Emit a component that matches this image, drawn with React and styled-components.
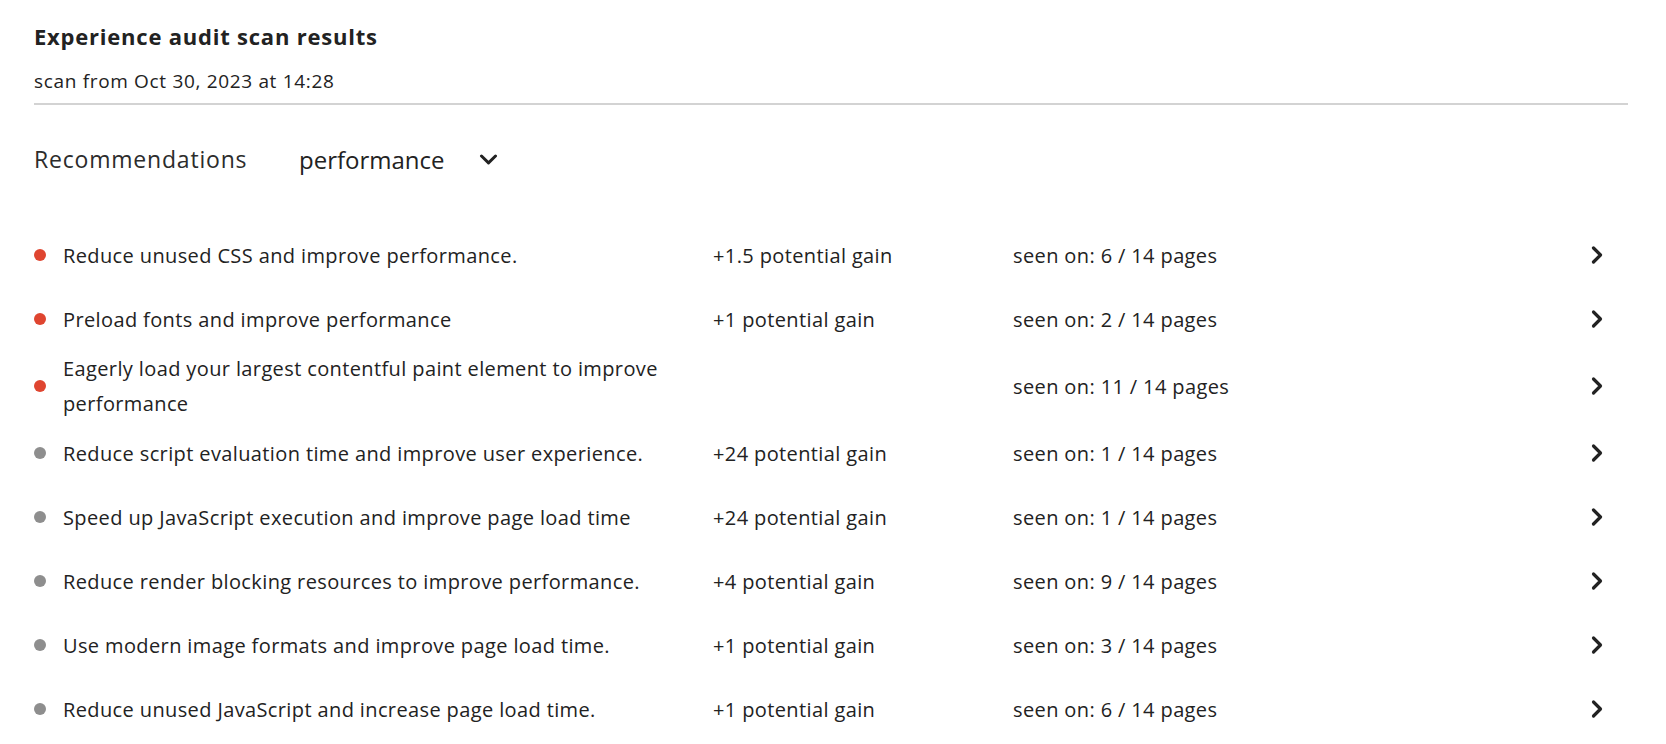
import React from "react";
import styled, { createGlobalStyle } from "styled-components";

const GlobalStyle = createGlobalStyle`
  body {
    margin: 0;
    background: #ffffff;
    font-family: "Open Sans", "Liberation Sans", sans-serif;
    color: #222222;
  }
`;

const recommendations = [
  { text: "Reduce unused CSS and improve performance.", gain: "+1.5 potential gain", seen: "6 / 14", severity: "high" },
  { text: "Preload fonts and improve performance", gain: "+1 potential gain", seen: "2 / 14", severity: "high" },
  { text: "Eagerly load your largest contentful paint element to improve performance", gain: "", seen: "11 / 14", severity: "high" },
  { text: "Reduce script evaluation time and improve user experience.", gain: "+24 potential gain", seen: "1 / 14", severity: "low" },
  { text: "Speed up JavaScript execution and improve page load time", gain: "+24 potential gain", seen: "1 / 14", severity: "low" },
  { text: "Reduce render blocking resources to improve performance.", gain: "+4 potential gain", seen: "9 / 14", severity: "low" },
  { text: "Use modern image formats and improve page load time.", gain: "+1 potential gain", seen: "3 / 14", severity: "low" },
  { text: "Reduce unused JavaScript and increase page load time.", gain: "+1 potential gain", seen: "6 / 14", severity: "low" },
];

export default function App() {
  return (
    <>
      <GlobalStyle />
      <Page>
        <Header>
          <Title>Experience audit scan results</Title>
          <Subtitle>scan from Oct 30, 2023 at 14:28</Subtitle>
        </Header>

        <FilterBar>
          <FilterLabel>Recommendations</FilterLabel>
          <Picker>
            <PickerValue>performance</PickerValue>
            <svg width="19" height="11" viewBox="0 0 19 11" fill="none">
              <path d="M2.5 2 L9.5 8.8 L16.5 2" stroke="#222" strokeWidth="3" strokeLinecap="round" strokeLinejoin="round" />
            </svg>
          </Picker>
        </FilterBar>

        <List>
          {recommendations.map((r) => (
            <Row key={r.text}>
              <Issue>
                <Dot $severity={r.severity} />
                <IssueText>{r.text}</IssueText>
              </Issue>
              <Cell>{r.gain}</Cell>
              <Cell>seen on: {r.seen} pages</Cell>
              <Chevron>
                <svg width="14" height="20" viewBox="0 0 14 20" fill="none">
                  <path d="M3.5 3 L10.5 10 L3.5 17" stroke="#222" strokeWidth="3.2" strokeLinecap="round" strokeLinejoin="round" />
                </svg>
              </Chevron>
            </Row>
          ))}
        </List>
      </Page>
    </>
  );
}

const Page = styled.main`
  padding: 21px 38px 0 34px;
`;

const Header = styled.header`
  border-bottom: 2px solid #d3d3d3;
  padding-bottom: 7px;
`;

const Title = styled.h1`
  margin: 0;
  font-size: 22px;
  line-height: 30px;
  font-weight: 700;
  letter-spacing: 0.78px;
  color: #222;
`;

const Subtitle = styled.div`
  margin-top: 15px;
  font-size: 19px;
  letter-spacing: 0.67px;
  line-height: 30px;
`;

const FilterBar = styled.div`
  display: flex;
  align-items: center;
  margin-top: 38px;
  height: 32px;
`;

const FilterLabel = styled.span`
  font-size: 23px;
  letter-spacing: 0.8px;
  color: #2c2c2c;
  width: 265px;
`;

const Picker = styled.button`
  display: flex;
  align-items: center;
  gap: 34px;
  border: none;
  background: none;
  padding: 0;
  font-family: inherit;
  cursor: pointer;
`;

const PickerValue = styled.span`
  font-size: 24px;
  color: #222;
`;

const List = styled.div`
  margin-top: 48px;
`;

const Row = styled.div`
  display: grid;
  grid-template-columns: 679px 300px 1fr auto;
  align-items: center;
  min-height: 64px;
  padding: 0 24px 0 0;
  box-sizing: border-box;
  font-size: 20px;
  letter-spacing: 0.38px;
  color: #222;
`;

const Issue = styled.div`
  display: flex;
  align-items: center;
  gap: 17px;
  padding-right: 30px;
`;

const Dot = styled.span`
  flex: none;
  width: 12px;
  height: 12px;
  border-radius: 50%;
  background: ${(p) => (p.$severity === "high" ? "#df4530" : "#8e8e8e")};
`;

const IssueText = styled.span`
  line-height: 35px;
`;

const Cell = styled.span`
  line-height: 35px;
`;

const Chevron = styled.span`
  display: flex;
  align-items: center;
`;
